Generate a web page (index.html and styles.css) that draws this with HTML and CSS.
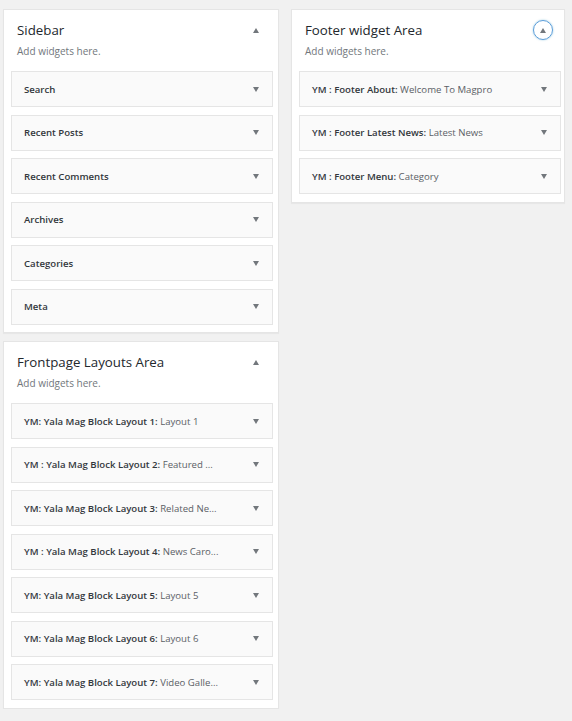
FILE: index.html
```html
<!DOCTYPE html>
<html>
<head>
<meta charset="utf-8">
<link rel="stylesheet" href="styles.css">
</head>
<body>
<div class="page">
  <div class="col col-left">
    <section class="area">
      <div class="area-head">
        <h2 class="area-title">Sidebar</h2>
        <span class="toggle"><span class="tri tri-up"></span></span>
      </div>
      <p class="area-desc">Add widgets here.</p>
      <ul class="widgets">
        <li class="widget"><span class="w-title">Search</span><span class="tri tri-down"></span></li>
        <li class="widget"><span class="w-title">Recent Posts</span><span class="tri tri-down"></span></li>
        <li class="widget"><span class="w-title">Recent Comments</span><span class="tri tri-down"></span></li>
        <li class="widget"><span class="w-title">Archives</span><span class="tri tri-down"></span></li>
        <li class="widget"><span class="w-title">Categories</span><span class="tri tri-down"></span></li>
        <li class="widget"><span class="w-title">Meta</span><span class="tri tri-down"></span></li>
      </ul>
    </section>
    <section class="area">
      <div class="area-head">
        <h2 class="area-title">Frontpage Layouts Area</h2>
        <span class="toggle"><span class="tri tri-up"></span></span>
      </div>
      <p class="area-desc">Add widgets here.</p>
      <ul class="widgets">
        <li class="widget"><span class="w-title">YM: Yala Mag Block Layout 1:<span class="w-sub"> Layout 1</span></span><span class="tri tri-down"></span></li>
        <li class="widget"><span class="w-title">YM : Yala Mag Block Layout 2:<span class="w-sub"> Featured ...</span></span><span class="tri tri-down"></span></li>
        <li class="widget"><span class="w-title">YM: Yala Mag Block Layout 3:<span class="w-sub"> Related Ne...</span></span><span class="tri tri-down"></span></li>
        <li class="widget"><span class="w-title">YM : Yala Mag Block Layout 4:<span class="w-sub"> News Caro...</span></span><span class="tri tri-down"></span></li>
        <li class="widget"><span class="w-title">YM: Yala Mag Block Layout 5:<span class="w-sub"> Layout 5</span></span><span class="tri tri-down"></span></li>
        <li class="widget"><span class="w-title">YM: Yala Mag Block Layout 6:<span class="w-sub"> Layout 6</span></span><span class="tri tri-down"></span></li>
        <li class="widget"><span class="w-title">YM: Yala Mag Block Layout 7:<span class="w-sub"> Video Galle...</span></span><span class="tri tri-down"></span></li>
      </ul>
    </section>
  </div>
  <div class="col col-right">
    <section class="area area-narrow">
      <div class="area-head">
        <h2 class="area-title">Footer widget Area</h2>
        <span class="toggle toggle-focus"><span class="tri tri-up"></span></span>
      </div>
      <p class="area-desc">Add widgets here.</p>
      <ul class="widgets">
        <li class="widget"><span class="w-title">YM : Footer About:<span class="w-sub"> Welcome To Magpro</span></span><span class="tri tri-down"></span></li>
        <li class="widget"><span class="w-title">YM : Footer Latest News:<span class="w-sub"> Latest News</span></span><span class="tri tri-down"></span></li>
        <li class="widget"><span class="w-title">YM : Footer Menu:<span class="w-sub"> Category</span></span><span class="tri tri-down"></span></li>
      </ul>
    </section>
  </div>
</div>
</body>
</html>
```

FILE: styles.css
```css
* { box-sizing: border-box; }
html, body {
  margin: 0;
  padding: 0;
  background: #f1f1f1;
  font-family: "Open Sans", "Noto Sans", "Liberation Sans", sans-serif;
  color: #23282d;
}
.page {
  display: flex;
  align-items: flex-start;
  gap: 12px;
  padding: 9px 0 0 3px;
}
.col {
  display: flex;
  flex-direction: column;
  gap: 8px;
}
.col-left { width: 276px; }
.col-right { width: 274px; }
.area {
  background: #fff;
  border: 1px solid #e5e5e5;
  box-shadow: 0 1px 1px rgba(0,0,0,0.04);
  padding: 0 5px 7.5px 7px;
}
.area-narrow { padding-right: 3.5px; }
.area-head {
  display: flex;
  align-items: center;
  justify-content: space-between;
  height: 22px;
  margin-top: 9px;
  padding-left: 6px;
  padding-right: 7.5px;
}
.area-title {
  margin: 0;
  font-size: 13.3px;
  font-weight: 400;
  line-height: 22px;
  color: #23282d;
}
.toggle {
  width: 20px;
  height: 20px;
  display: flex;
  align-items: center;
  justify-content: center;
  border-radius: 50%;
  border: 1px solid transparent;
}
.toggle-focus {
  border: 1px solid #5b9dd9;
  box-shadow: 0 0 2px rgba(30,140,190,0.5);
}
.area-desc {
  margin: 0;
  padding-left: 6px;
  font-size: 10px;
  line-height: 20px;
  color: #72777c;
  height: 20px;
}
.widgets {
  list-style: none;
  margin: 10px 0 0;
  padding: 0;
  display: flex;
  flex-direction: column;
  gap: 7.5px;
}
.widget {
  height: 36px;
  background: #fafafa;
  border: 1px solid #e5e5e5;
  display: flex;
  align-items: center;
  justify-content: space-between;
  padding: 0 13px 0 12px;
}
.w-title {
  font-size: 9.6px;
  font-weight: 600;
  color: #32373c;
  white-space: nowrap;
}
.w-sub {
  font-weight: 400;
  color: #5a5f66;
}
.tri {
  display: block;
  width: 0;
  height: 0;
  border-left: 3.5px solid transparent;
  border-right: 3.5px solid transparent;
}
.tri-down { border-top: 5px solid #72777c; }
.tri-up { border-bottom: 5px solid #72777c; }
```
